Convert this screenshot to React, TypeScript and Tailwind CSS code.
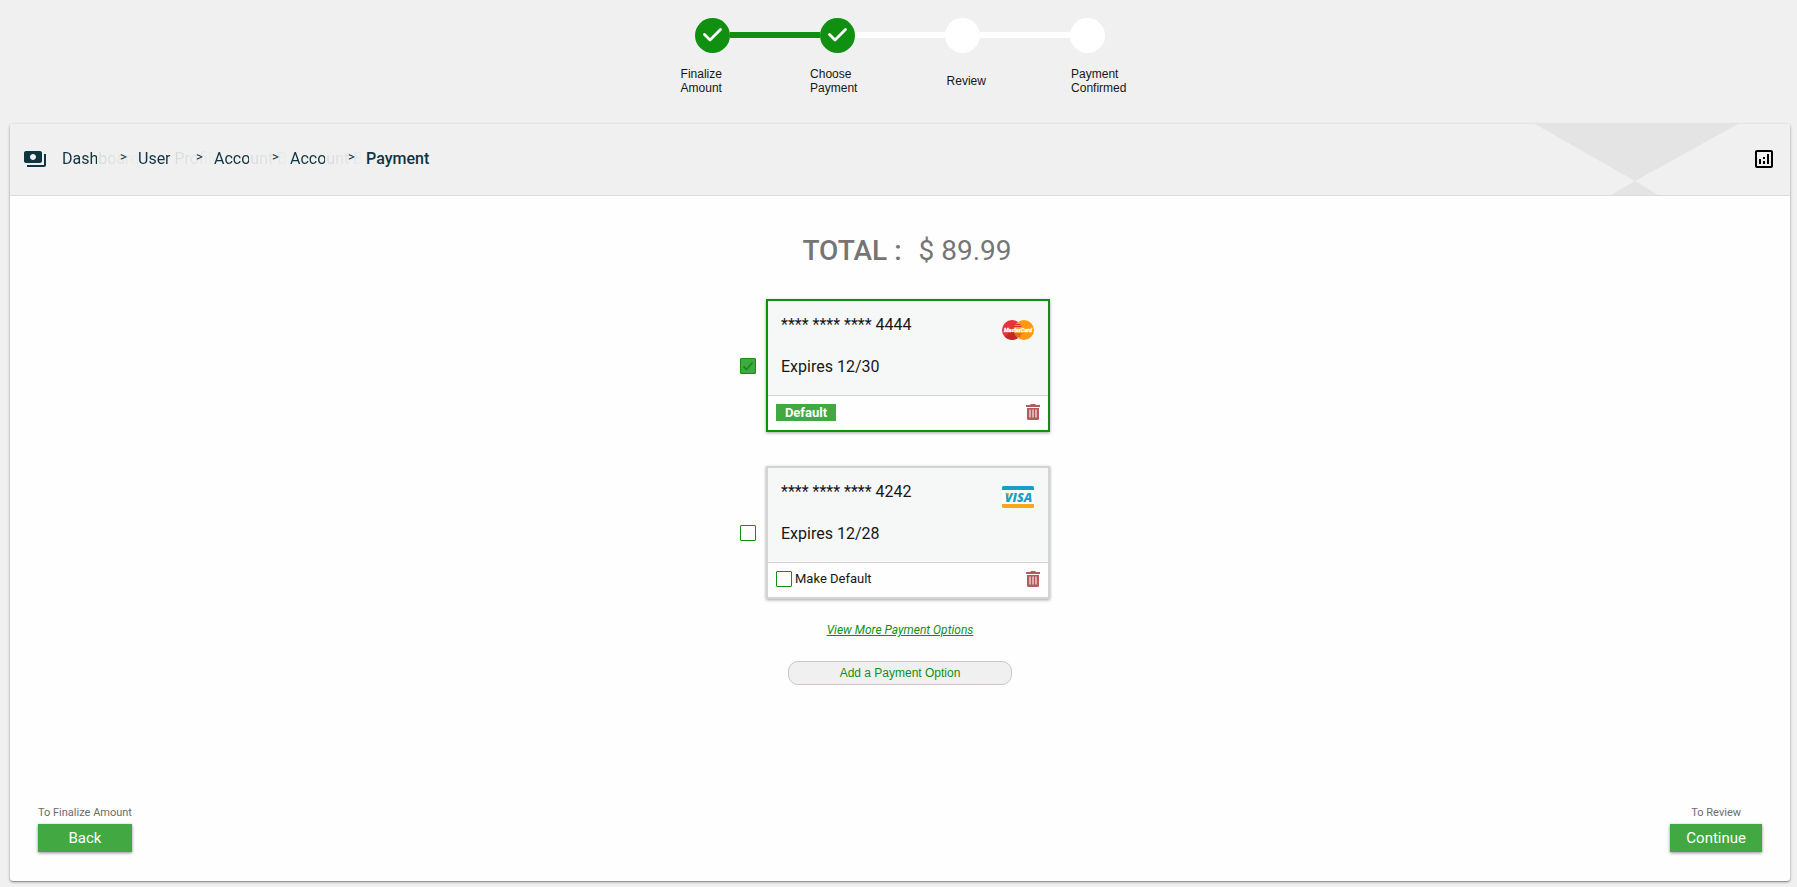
import React, { useState } from "react";
import { MdOutlineAnalytics, MdPayments } from "react-icons/md";

const steps = [
  { label: ["Finalize", "Amount"], done: true },
  { label: ["Choose", "Payment"], done: true },
  { label: ["Review"], done: false },
  { label: ["Payment", "Confirmed"], done: false },
];

const crumbs = ["Dashboard", "User Profile", "Account B", "Account B"];

const cards = [
  { last4: "4444", expires: "12/30", brand: "mastercard" },
  { last4: "4242", expires: "12/28", brand: "visa" },
];

const MasterCardLogo = () => (
  <svg width="32" height="22" viewBox="0 -1 32 22" role="img" aria-label="MasterCard">
    <circle cx="10" cy="10" r="10" fill="#e8323c" />
    <path d="M10 10h10a10 10 0 0 1-17 7z" fill="#c9252d" />
    <circle cx="22" cy="10" r="10" fill="#ff9a10" />
    <path d="M16 2a10 10 0 0 1 0 16a10 10 0 0 1 0-16z" fill="#f7a81c" />
    <path d="M13.500 4.500h5M12.500 6.500h7M12.500 14h7M13.500 16h5" stroke="#d42a32" strokeWidth="1" />
    <text
      x="16"
      y="12.300"
      textAnchor="middle"
      fontSize="5.500"
      fontWeight="bold"
      fontStyle="italic"
      fontFamily="Roboto, sans-serif"
      fill="#fff"
      stroke="#fff"
      strokeWidth="0.300"
    >
      MasterCard
    </text>
  </svg>
);

const VisaLogo = () => (
  <svg width="32" height="22" viewBox="0 0 32 22" role="img" aria-label="Visa">
    <rect width="32" height="22" rx="1.500" fill="#fff" />
    <path d="M0 4V1.500A1.500 1.500 0 0 1 1.500 0h29A1.500 1.500 0 0 1 32 1.500V4z" fill="#17a0c4" />
    <path d="M0 18h32v2.500a1.500 1.500 0 0 1-1.500 1.500h-29A1.500 1.500 0 0 1 0 20.500z" fill="#f9a61f" />
    <text
      x="16.500"
      y="15.500"
      textAnchor="middle"
      fontSize="12.500"
      fontWeight="800"
      fontStyle="italic"
      fontFamily="Open Sans, sans-serif"
      fill="#17a0c4"
    >
      VISA
    </text>
    <path d="M3 6.800h3.500l1 4.500C6.500 9 5 7.800 3 6.800z" fill="#f9a61f" />
  </svg>
);

const TrashIcon = () => (
  <svg width="14" height="16" viewBox="0 0 14 16" aria-hidden="true">
    <path d="M0 1h4l1-1h4l1 1h4v2H0z" fill="#b35a5a" />
    <path d="M1 4h12v10.500a1.500 1.500 0 0 1-1.500 1.500h-9A1.500 1.500 0 0 1 1 14.500z" fill="#b35a5a" />
    <path d="M3 5.500h2v8H3zM6 5.500h2v8H6zM9 5.500h2v8H9z" fill="#dcb0b0" />
  </svg>
);

const CheckBox = ({ checked, onChange, label }: any) => (
  <span className="relative flex h-4 w-4 shrink-0">
    <input
      type="checkbox"
      aria-label={label}
      checked={checked}
      onChange={onChange}
      className="h-4 w-4 appearance-none rounded-[1px] border border-[#109010] checked:bg-[#42a842]"
    />
    {checked && (
      <svg className="pointer-events-none absolute inset-0" width="16" height="16" viewBox="0 0 16 16">
        <path d="M3.500 8.500l3 3l6-7" fill="none" stroke="#109010" strokeWidth="1.800" />
      </svg>
    )}
  </span>
);

const App = () => {
  const [selected, setSelected] = useState("4444");
  const [defaultCard, setDefaultCard] = useState("4444");

  return (
    <div className="flex min-h-screen flex-col bg-[#f0f0f0] pt-[18px] pr-[7px] pb-[6px] pl-[10px] font-['Roboto',sans-serif] text-[#171717]">
      {/* Progress steps */}
      <div className="flex items-start justify-center">
        {steps.map((step, i) => (
          <React.Fragment key={i}>
            {i > 0 && (
              <div className={`mt-[14px] h-[6px] w-[90px] ${step.done ? "bg-[#109010]" : "bg-white"}`} />
            )}
            <div
              className={`flex h-[35px] w-[35px] items-center justify-center rounded-full ${
                step.done ? "bg-[#109010]" : "bg-white"
              }`}
            >
              {step.done && (
                <svg width="35" height="35" viewBox="0 0 35 35">
                  <path
                    d="M9.500 16.500l5.500 5.500l10.500-10.500"
                    fill="none"
                    stroke="#fff"
                    strokeWidth="2.800"
                    strokeLinecap="round"
                    strokeLinejoin="round"
                  />
                </svg>
              )}
            </div>
          </React.Fragment>
        ))}
      </div>
      <div className="mx-auto mt-[14px] grid w-full max-w-[530px] grid-cols-4 items-center justify-items-center font-['Liberation_Sans',sans-serif] text-[12px] leading-[14px]">
        {steps.map((step, i) => (
          <div key={i}>
            {step.label.map((line) => (
              <div key={line}>{line}</div>
            ))}
          </div>
        ))}
      </div>

      <main className="mt-[29px] flex flex-1 flex-col rounded-[3px] bg-[#fefefe] shadow-[0_1px_3px_rgba(0,0,0,0.35),0_1px_1px_rgba(0,0,0,0.2)]">
        <header className="relative flex h-[72px] items-center justify-between rounded-t-[3px] border-b border-[#dcdcdc] bg-[#f0f0f0] pr-[14px] pb-[2px] pl-[13px]">
          <svg className="absolute top-0 right-[52px]" width="203" height="71" viewBox="0 0 203 71">
            <path d="M0 0h203L100 57z" fill="#e4e4e4" />
            <path d="M100 57l23 14H76z" fill="#e4e4e4" />
          </svg>
          <nav className="flex items-center text-base text-[#0f3541]">
            <MdPayments className="mr-[15px]" size={24} />
            {crumbs.map((crumb, i) => (
              <div key={i} className="relative w-[76px]">
                <a
                  href="#"
                  className="block w-[76px] overflow-hidden bg-[linear-gradient(to_right,#0f3541_35px,#0f35411c_35px,#0f354105_74px)] bg-clip-text whitespace-nowrap text-transparent"
                >
                  {crumb}
                </a>
                <span className="absolute top-0 left-[58px] text-[13px] leading-5">&gt;</span>
              </div>
            ))}
            <span className="font-medium">Payment</span>
          </nav>
          <button type="button" aria-label="Summary" className="relative text-black">
            <MdOutlineAnalytics size={24} />
          </button>
        </header>

        <div className="flex flex-1 flex-col items-center">
          <h1 className="mt-[39px] flex gap-[17px] pl-[14px] text-[28px] leading-8 text-[#757575]">
            <span className="font-medium">TOTAL :</span>
            <span>$ 89.99</span>
          </h1>

          <div className="mt-8 flex flex-col gap-[34px] pr-[10px]">
            {cards.map((card) => {
              const active = selected === card.last4;
              return (
                <div key={card.last4} className="flex items-center gap-[10px]">
                  <CheckBox
                    label={`Pay with card ending ${card.last4}`}
                    checked={active}
                    onChange={() => setSelected(card.last4)}
                  />
                  <div
                    className={`w-[284px] border-2 shadow-[0_1px_3px_rgba(0,0,0,0.35)] ${
                      active ? "border-[#109010]" : "border-[#d3d3d3]"
                    }`}
                  >
                    <div className="flex h-[95px] justify-between border-b border-[#d3d3d3] bg-[#f6f8f8] pt-[14px] pr-[14px] pl-[13px]">
                      <div className="flex flex-col gap-[22px] text-base leading-5">
                        <p>**** **** **** {card.last4}</p>
                        <p>Expires {card.expires}</p>
                      </div>
                      <div className="pt-1">{card.brand === "visa" ? <VisaLogo /> : <MasterCardLogo />}</div>
                    </div>
                    <div className="flex h-[34px] items-center justify-between px-2 pb-[2px]">
                      {defaultCard === card.last4 ? (
                        <span className="w-[60px] bg-[#42a842] text-center text-[13px] leading-[17px] font-bold text-white">
                          Default
                        </span>
                      ) : (
                        <label className="flex items-center gap-[3px] text-[13px]">
                          <CheckBox checked={false} onChange={() => setDefaultCard(card.last4)} />
                          Make Default
                        </label>
                      )}
                      <button type="button" aria-label="Delete card">
                        <TrashIcon />
                      </button>
                    </div>
                  </div>
                </div>
              );
            })}
          </div>

          <a href="#" className="mt-[23px] text-[12px] leading-4 text-[#109010] italic underline">
            View More Payment Options
          </a>
          <button
            type="button"
            className="mt-[23px] h-6 w-[224px] rounded-[10px] border border-[#cdc5c9] bg-[#f0f0f0] font-['Liberation_Sans',sans-serif] text-[12px] text-[#109010]"
          >
            Add a Payment Option
          </button>
        </div>

        <footer className="flex justify-between px-7 pb-[29px] text-[11px] leading-4 text-[#6b6b6b]">
          <div className="flex flex-col items-center gap-[3px]">
            <span>To Finalize Amount</span>
            <button
              type="button"
              className="h-7 w-full bg-[#42a842] text-[15px] text-white shadow-[0_1px_3px_rgba(0,0,0,0.45)]"
            >
              Back
            </button>
          </div>
          <div className="flex flex-col items-center gap-[3px]">
            <span>To Review</span>
            <button
              type="button"
              className="h-7 bg-[#42a842] px-4 text-[15px] text-white shadow-[0_1px_3px_rgba(0,0,0,0.45)]"
            >
              Continue
            </button>
          </div>
        </footer>
      </main>
    </div>
  );
};

export default App;
